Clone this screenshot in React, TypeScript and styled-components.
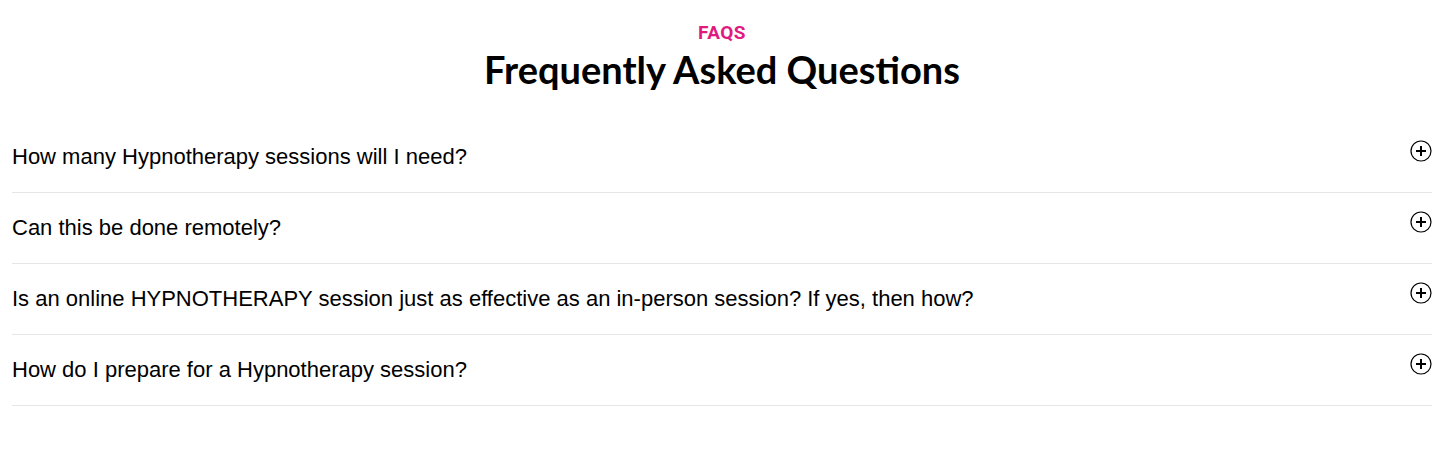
import React from 'react';
import styled, { createGlobalStyle } from 'styled-components';

const GlobalStyle = createGlobalStyle`
  html, body {
    margin: 0;
    padding: 0;
    background: #ffffff;
  }
  body {
    font-family: 'Liberation Sans', Arial, sans-serif;
    color: #111111;
  }
`;

const StSection = styled.section`
  padding: 20px 9px 0 12px;
`;

const StHeader = styled.header`
  display: flex;
  flex-direction: column;
  align-items: center;
  margin-bottom: 26px;
`;

const StEyebrow = styled.span`
  font-family: Roboto, 'Noto Sans', sans-serif;
  font-weight: 700;
  font-size: 19px;
  line-height: 26px;
  color: #e01a7f;
  letter-spacing: 0.5px;
`;

const StTitle = styled.h2`
  margin: -2px 0 2px;
  font-family: Lato, 'Noto Sans', sans-serif;
  font-weight: 700;
  font-size: 38px;
  line-height: 50px;
  color: #000000;
`;

const StList = styled.div`
  display: flex;
  flex-direction: column;
`;

const StRow = styled.div`
  display: flex;
  align-items: flex-start;
  justify-content: space-between;
  padding: 20px 0;
  border-bottom: 1px solid #e6e6e6;
  cursor: pointer;
`;

const StQuestion = styled.span`
  font-size: 22px;
  line-height: 30px;
  color: #000000;
`;

const StIcon = styled.svg`
  flex-shrink: 0;
  width: 22px;
  height: 22px;
  margin-top: -2px;
`;

const questions = [
  'How many Hypnotherapy sessions will I need?',
  'Can this be done remotely?',
  'Is an online HYPNOTHERAPY session just as effective as an in-person session? If yes, then how?',
  'How do I prepare for a Hypnotherapy session?',
];

const PlusCircle = () => (
  <StIcon viewBox="0 0 22 22" fill="none">
    <circle cx="11" cy="11" r="10" stroke="#000" strokeWidth="1.2" />
    <path d="M11 6v10M6 11h10" stroke="#000" strokeWidth="2" />
  </StIcon>
);

export default function App() {
  return (
    <>
      <GlobalStyle />
      <StSection>
        <StHeader>
          <StEyebrow>FAQS</StEyebrow>
          <StTitle>Frequently Asked Questions</StTitle>
        </StHeader>
        <StList>
          {questions.map((q) => (
            <StRow key={q}>
              <StQuestion>{q}</StQuestion>
              <PlusCircle />
            </StRow>
          ))}
        </StList>
      </StSection>
    </>
  );
}
